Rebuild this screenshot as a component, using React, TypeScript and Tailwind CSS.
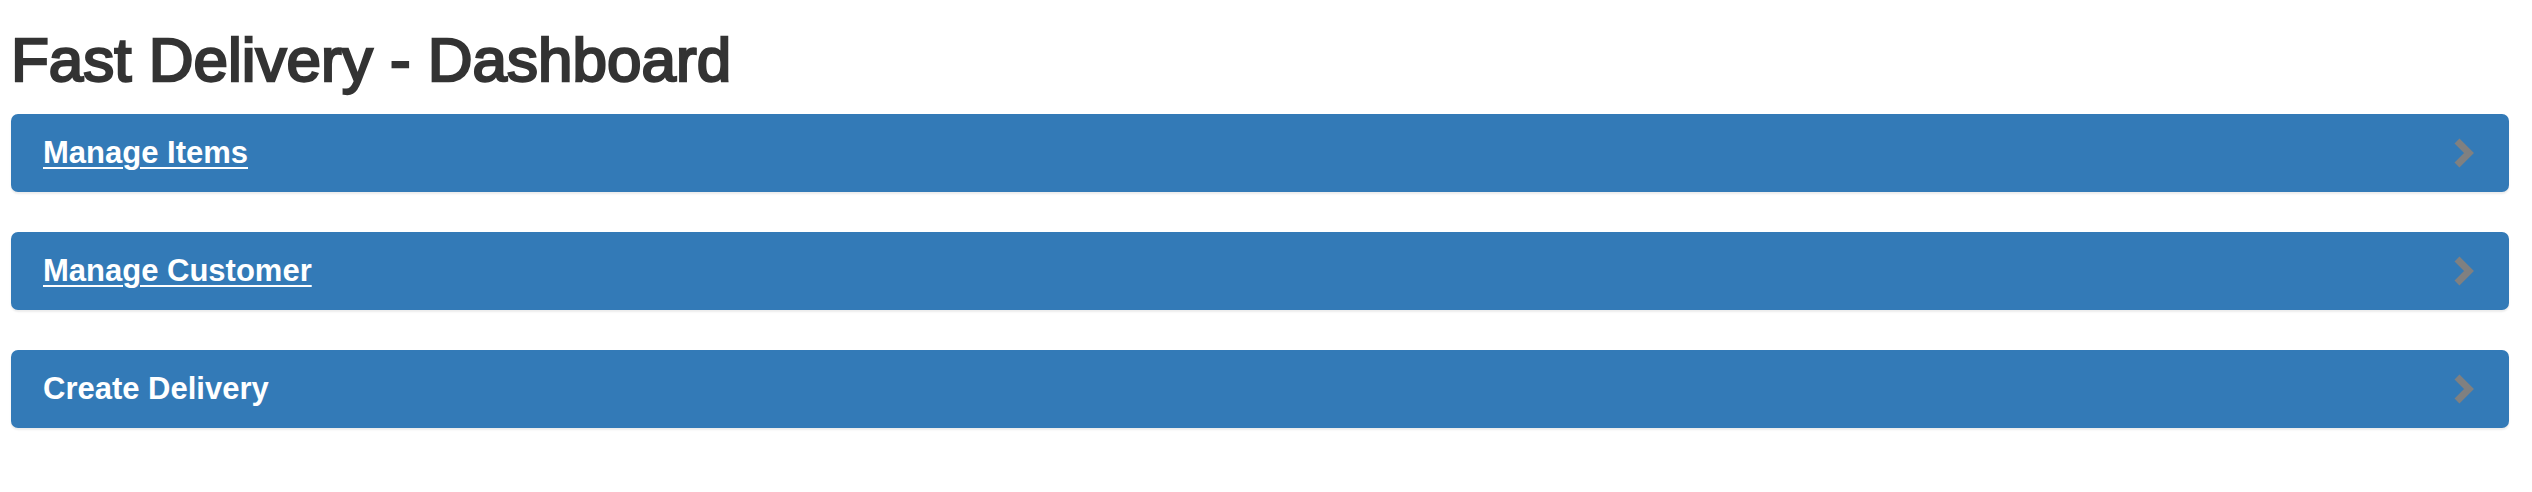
export default function App() {
  const items = [
    { label: "Manage Items", link: true },
    { label: "Manage Customer", link: true },
    { label: "Create Delivery", link: false },
  ];

  return (
    <div
      className="bg-white min-h-screen pl-[11px] pr-[23px] text-[#333333]"
      style={{ fontFamily: '"Liberation Sans", Arial, Helvetica, sans-serif' }}
    >
      <h1 className="pt-[24px] text-[62px] leading-[72px] font-normal [-webkit-text-stroke:2.4px_#333333]">
        Fast Delivery - Dashboard
      </h1>
      <div className="mt-[18px] flex flex-col gap-[40px]">
        {items.map((item) => (
          <div
            key={item.label}
            className="h-[78px] flex items-center justify-between rounded-[7px] bg-[#337ab7] pl-[32px] pr-[35px] shadow-[0_2px_2px_rgba(0,0,0,0.08)]"
          >
            <span
              className={
                item.link
                  ? "text-white text-[31px] font-bold underline decoration-2 underline-offset-[4px]"
                  : "text-white text-[31px] font-bold"
              }
            >
              {item.label}
            </span>
            <svg width="20" height="30" viewBox="0 0 20 30">
              <path
                d="M3 3 L15 15 L3 27"
                fill="none"
                stroke="#808080"
                strokeWidth="7"
                strokeLinejoin="miter"
              />
            </svg>
          </div>
        ))}
      </div>
    </div>
  );
}
